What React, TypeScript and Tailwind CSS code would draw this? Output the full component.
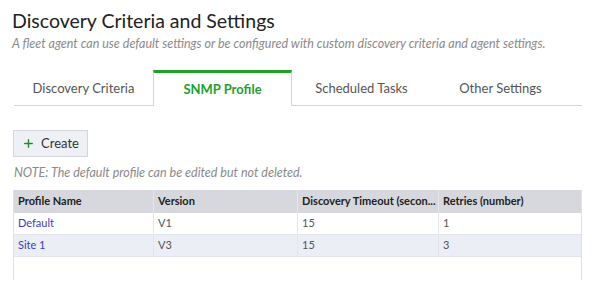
import { Plus } from "lucide-react";

type Profile_T = {
  name: string;
  version: string;
  timeout: number;
  retries: number;
};

const profiles: Profile_T[] = [
  { name: "Default", version: "V1", timeout: 15, retries: 1 },
  { name: "Site 1", version: "V3", timeout: 15, retries: 3 },
];

const tabs = ["Discovery Criteria", "SNMP Profile", "Scheduled Tasks", "Other Settings"];

export default function App() {
  const active = "SNMP Profile";

  return (
    <div
      className="w-[600px] h-[283px] bg-white overflow-hidden text-[#333]"
      style={{ fontFamily: "Lato, 'Open Sans', sans-serif" }}
    >
      {/* 제목 */}
      <div className="pl-3 pt-[9px]">
        <h1 className="text-[19.5px] leading-[24px] text-[#222]">Discovery Criteria and Settings</h1>
        <p className="text-[12.5px] italic text-[#8a8a8a] mt-[3px] leading-[15px]">
          A fleet agent can use default settings or be configured with custom discovery criteria and agent settings.
        </p>
      </div>

      {/* 탭 */}
      <div className="ml-[14px] w-[568px] mt-[19px] flex h-[36px] border-b border-[#d4d4d4]">
        {tabs.map((t) =>
          t === active ? (
            <div
              key={t}
              className="w-[139px] -mb-px bg-white border-t-[3px] border-t-[#1fa12e] border-x border-x-[#d4d4d4] flex items-center justify-center text-[13px] font-bold text-[#1fa12e]"
            >
              {t}
            </div>
          ) : (
            <div key={t} className="w-[139px] flex items-center justify-center pt-[3px] text-[13px] text-[#555]">
              {t}
            </div>
          )
        )}
      </div>

      {/* 생성 버튼 */}
      <div className="pl-[13px] mt-[24px]">
        <button className="h-[27px] w-[75px] flex items-center justify-center gap-[6px] bg-[#eef0f5] border border-[#d3d6de] text-[13px] text-[#333]">
          <Plus size={13} strokeWidth={2.5} className="text-[#1c8a2a]" />
          Create
        </button>
        <p className="text-[12.5px] italic text-[#8a8a8a] mt-[8px] leading-[15px] pl-px">
          NOTE: The default profile can be edited but not deleted.
        </p>
      </div>

      {/* 테이블 */}
      <div className="ml-[13px] w-[569px] mt-[10px] border-x border-[#e2e2e2] h-[90px]">
        <div className="grid grid-cols-[140px_144px_141px_1fr] h-[23px] bg-[#d6d8dd] text-[11px] font-bold text-[#222] whitespace-nowrap">
          <div className="px-[4px] flex items-center border-r border-[#e6e6e6]">Profile Name</div>
          <div className="px-[4px] flex items-center border-r border-[#e6e6e6]">Version</div>
          <div className="px-[4px] flex items-center border-r border-[#e6e6e6]">Discovery Timeout (secon...</div>
          <div className="px-[4px] flex items-center">Retries (number)</div>
        </div>
        {profiles.map((p, i) => (
          <div
            key={p.name}
            className={`grid grid-cols-[140px_144px_141px_1fr] h-[22px] text-[11px] text-[#555] border-b border-[#e4e5ea] ${
              i % 2 === 1 ? "bg-[#eceef5]" : "bg-white"
            }`}
          >
            <div className="px-[4px] flex items-center border-r border-[#e4e5ea] text-[#3b3bc8]">{p.name}</div>
            <div className="px-[4px] flex items-center border-r border-[#e4e5ea]">{p.version}</div>
            <div className="px-[4px] flex items-center border-r border-[#e4e5ea]">{p.timeout}</div>
            <div className="px-[4px] flex items-center">{p.retries}</div>
          </div>
        ))}
      </div>
    </div>
  );
}
